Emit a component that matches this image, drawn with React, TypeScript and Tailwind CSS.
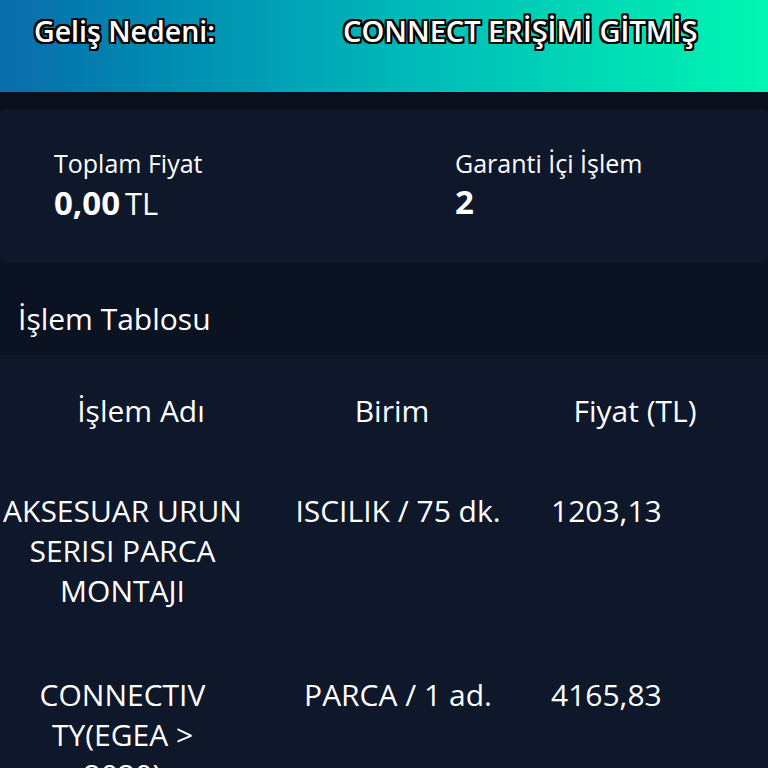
const rows = [
  { name: ['AKSESUAR URUN', 'SERISI PARCA', 'MONTAJI'], unit: 'ISCILIK / 75 dk.', price: '1203,13' },
  { name: ['CONNECTIV', 'TY(EGEA >', '2020)'], unit: 'PARCA / 1 ad.', price: '4165,83' },
];

const outline = {
  textShadow:
    '-2px -2px 0 #000, 2px -2px 0 #000, -2px 2px 0 #000, 2px 2px 0 #000, 0 2px 0 #000, 0 -2px 0 #000, 2px 0 0 #000, -2px 0 0 #000',
};

export default function App() {
  return (
    <div className="h-[768px] w-[768px] overflow-hidden bg-[#0a0f1d] font-['Open_Sans',sans-serif] text-white">
      <header className="h-[92px] bg-gradient-to-r from-[#0a6cab] via-[#00b5b8] to-[#00f7b0]">
        <div className="flex pt-[12px] text-[29px] font-semibold leading-[38px]">
          <span className="w-[343px] pl-[34px] text-[28.5px]" style={outline}>
            Geliş Nedeni:
          </span>
          <span style={outline}>CONNECT ERİŞİMİ GİTMİŞ</span>
        </div>
      </header>

      <div className="pt-[17px]">
        <div className="flex h-[154px] rounded-md bg-[#0f172a] pt-[37px]">
          <div className="w-[455px] pl-[54px]">
            <div className="text-[25px] leading-[34px]">Toplam Fiyat</div>
            <div className="flex items-baseline gap-[5px]">
              <span className="text-[33px] font-bold leading-[44px]">0,00</span>
              <span className="text-[31px]">TL</span>
            </div>
          </div>
          <div>
            <div className="text-[25px] leading-[34px]">Garanti İçi İşlem</div>
            <div className="text-[33px] font-bold leading-[44px]">2</div>
          </div>
        </div>
      </div>

      <div className="h-[92px] bg-[#0b1222] pl-[18px] pt-[36px] text-[30px] leading-[40px]">
        İşlem Tablosu
      </div>

      <div className="bg-[#0f172a] pt-[36px] text-[30px] leading-[40px]">
        <div className="grid grid-cols-[282px_220px_1fr] text-center">
          <div>İşlem Adı</div>
          <div>Birim</div>
          <div>Fiyat (TL)</div>
        </div>
        <div className="mt-[60px] flex flex-col gap-[64px]">
          {rows.map((r) => (
            <div key={r.price} className="grid grid-cols-[245px_306px_110px] text-center">
              <div>
                {r.name.map((l) => (
                  <div key={l}>{l}</div>
                ))}
              </div>
              <div>{r.unit}</div>
              <div>{r.price}</div>
            </div>
          ))}
        </div>
      </div>
    </div>
  );
}
